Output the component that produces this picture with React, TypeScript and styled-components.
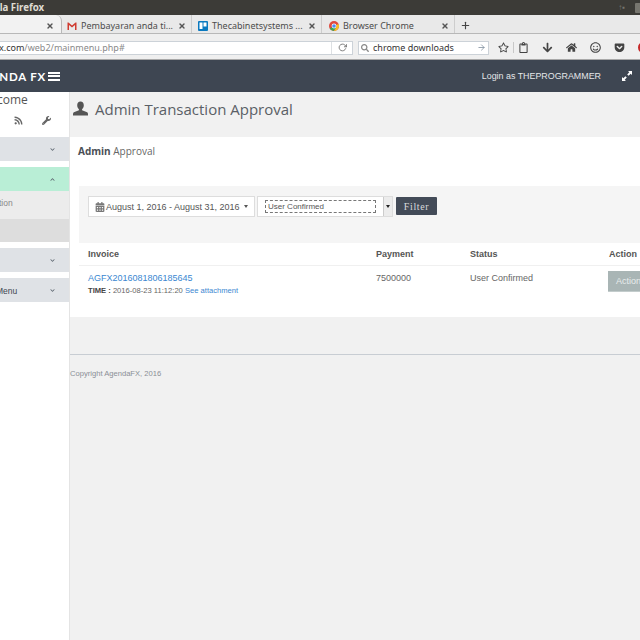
import styled, { createGlobalStyle } from 'styled-components';
import { FaRss, FaWrench, FaCalendarAlt, FaChevronDown, FaChevronUp, FaHome, FaArrowDown, FaRegStar, FaRegClipboard, FaRegSmile, FaGetPocket, FaSearch } from 'react-icons/fa';
import { FiRotateCw, FiArrowRight, FiPlus, FiX } from 'react-icons/fi';

const GlobalStyle = createGlobalStyle`
  html, body { margin: 0; padding: 0; width: 640px; height: 640px; overflow: hidden; background: #f1f1f1; }
  * { box-sizing: border-box; }
`;

const Screen = styled.div`
  width: 640px;
  height: 640px;
  overflow: hidden;
  display: flex;
  flex-direction: column;
  font-family: 'Liberation Sans', Arial, sans-serif;
`;

const TitleBar = styled.div`
  height: 15px;
  flex: none;
  background: #3c3b37;
  display: flex;
  align-items: center;
  justify-content: space-between;
  overflow: hidden;
`;

const TitleText = styled.span`
  margin-left: -26px;
  font: bold 9.7px 'Noto Sans', sans-serif;
  color: #dfdbd2;
  white-space: nowrap;
`;

const TrayIcons = styled.div`
  display: flex;
  align-items: center;
  gap: 10px;
  margin-right: -1px;
  color: #77766f;
  font-size: 8px;
`;

const TrayBox = styled.span`
  width: 6px;
  height: 10px;
  background: #77766f;
  border-radius: 1px;
`;

const TabStrip = styled.div`
  height: 19px;
  flex: none;
  background: #e9e9e9;
  border-bottom: 1px solid #b8b8b8;
  display: flex;
  align-items: center;
`;

const Tab = styled.div<{ $w: number; $pad: number; $active?: boolean }>`
  width: ${(p) => p.$w}px;
  height: 18px;
  flex: none;
  display: flex;
  align-items: center;
  gap: 4px;
  padding: 3px ${(p) => (p.$active ? 7 : 5)}px 0 ${(p) => p.$pad}px;
  font: 9px 'Noto Sans', sans-serif;
  color: #4c4c4c;
  white-space: nowrap;
  background: ${(p) => (p.$active ? '#f2f2f2' : 'transparent')};
  border-right: 1px solid ${(p) => (p.$active ? '#b8b8b8' : '#cdcdcd')};
  border-top-right-radius: ${(p) => (p.$active ? '6px' : '0')};
`;

const TabLabel = styled.span`
  flex: 1;
`;

const TabClose = styled(FiX)`
  width: 8px;
  height: 8px;
  stroke-width: 4;
  color: #555;
  flex: none;
  margin-left: auto;
`;

const NewTab = styled(FiPlus)`
  width: 11px;
  height: 11px;
  stroke-width: 2.5;
  color: #444;
  margin: 3px 0 0 5px;
`;

const NavBar = styled.div`
  height: 26px;
  flex: none;
  background: #efefef;
  border-bottom: 1px solid #a8a8a8;
  display: flex;
  align-items: center;
  padding-top: 2px;
  overflow: hidden;
`;

const UrlBox = styled.div`
  width: 353px;
  height: 14px;
  flex: none;
  background: #fff;
  border: 1px solid #ccd2d8;
  border-left: 0;
  display: flex;
  align-items: center;
  justify-content: space-between;
  padding-right: 5px;
  font: 9px 'Noto Sans', sans-serif;
  color: #8a8a8a;
  white-space: nowrap;
  overflow: hidden;
`;

const UrlText = styled.span`
  margin-left: -1px;
  b { font-weight: 400; color: #333; }
`;

const Reload = styled(FiRotateCw)`
  width: 9px;
  height: 9px;
  color: #777;
  stroke-width: 2.5;
`;

const UrlTools = styled.div`
  height: 100%;
  display: flex;
  align-items: center;
  gap: 6px;
  &::before {
    content: '';
    width: 1px;
    height: 100%;
    background: #dde0e3;
  }
`;

const SearchBox = styled.div`
  width: 131px;
  height: 14px;
  flex: none;
  margin-left: 5px;
  background: #fff;
  border: 1px solid #ccd2d8;
  display: flex;
  align-items: center;
  gap: 4px;
  padding: 0 2px 0 2px;
  font: 9px 'Noto Sans', sans-serif;
  color: #333;
`;

const SearchLabel = styled.span`
  flex: 1;
  white-space: nowrap;
`;

const NavIcons = styled.div`
  display: flex;
  align-items: center;
  gap: 13px;
  margin-left: 9px;
  color: #444;
  font-size: 11px;
  flex: none;
`;

const StarSlot = styled.span`
  display: flex;
  flex: none;
  padding-right: 4px;
  margin-right: -9px;
  border-right: 1px solid #c8c8c8;
`;

const BlockIcon = styled.span`
  width: 11px;
  height: 11px;
  flex: none;
  border: 3px solid #c62828;
  border-radius: 50%;
`;

const Header = styled.div`
  height: 32px;
  flex: none;
  background: #3e4652;
  display: flex;
  align-items: center;
  color: #fff;
`;

const Brand = styled.div`
  width: 138px;
  display: flex;
  align-items: center;
  justify-content: flex-end;
  gap: 2px;
  margin-left: -78px;
  flex: none;
  font: bold 11.5px Lato, sans-serif;
  letter-spacing: 0.8px;
  white-space: nowrap;
`;

const Burger = styled.span`
  width: 12px;
  height: 9px;
  flex: none;
  border-top: 2px solid #fff;
  border-bottom: 2px solid #fff;
  position: relative;
  &::after {
    content: '';
    position: absolute;
    left: 0;
    right: 0;
    top: 1.5px;
    height: 2px;
    background: #fff;
  }
`;

const LoginLabel = styled.span`
  margin-left: auto;
  font-size: 8.9px;
  color: #e4e6e9;
  white-space: nowrap;
`;

const ExpandIcon = styled.svg`
  width: 10px;
  height: 10px;
  flex: none;
  margin: 0 8px 0 21px;
`;

const Body = styled.div`
  flex: 1;
  display: flex;
  min-height: 0;
`;

const Sidebar = styled.aside`
  width: 70px;
  flex: none;
  background: #fff;
  border-right: 1px solid #e4e4e4;
  display: flex;
  flex-direction: column;
`;

const Welcome = styled.div`
  height: 45px;
  flex: none;
  padding-top: 1px;
  overflow: hidden;
`;

const WelcomeText = styled.div`
  font: 12px 'Open Sans', sans-serif;
  line-height: 14px;
  color: #555;
  white-space: nowrap;
  margin-left: -3px;
`;

const WelcomeIcons = styled.div`
  display: flex;
  justify-content: flex-end;
  gap: 19px;
  padding: 9px 18px 0 0;
  color: #666;
  font-size: 9px;
`;

const MenuItem = styled.div<{ $bg: string; $h: number; $gap?: number }>`
  height: ${(p) => p.$h}px;
  flex: none;
  margin-top: ${(p) => p.$gap ?? 0}px;
  background: ${(p) => p.$bg};
  display: flex;
  align-items: center;
  justify-content: space-between;
  padding-right: 13px;
  font-size: 8.5px;
  color: #555;
  white-space: nowrap;
  overflow: hidden;
  svg { width: 7px; height: 5px; color: #5d6670; flex: none; }
`;

const MenuLabel = styled.span<{ $dark?: boolean }>`
  color: ${(p) => (p.$dark ? '#3e4652' : '#888')};
  margin: ${(p) => (p.$dark ? '1px 0 0 -4px' : '0 0 4px -1px')};
`;

const Main = styled.main`
  flex: 1;
  min-width: 0;
  background: #f1f1f1;
  display: flex;
  flex-direction: column;
`;

const PageTitle = styled.div`
  height: 45px;
  flex: none;
  display: flex;
  align-items: center;
  gap: 7px;
  padding: 0 0 12px 3px;
  font: 15px 'Open Sans', sans-serif;
  color: #5a5f66;
  white-space: nowrap;
`;

const UserGlyph = styled.svg`
  width: 15px;
  height: 15px;
  flex: none;
`;

const Card = styled.section`
  height: 180px;
  flex: none;
  background: #fff;
  padding: 0 0 0 9px;
  overflow: hidden;
`;

const CardTitle = styled.div`
  height: 49px;
  flex: none;
  padding-top: 7px;
  margin-left: -1px;
  font: 10px 'Open Sans', sans-serif;
  line-height: 14px;
  color: #666;
  b { color: #4a4f55; }
`;

const FilterPanel = styled.div`
  height: 57px;
  background: #f5f5f5;
  display: flex;
  align-items: flex-start;
  padding: 10px 0 0 9px;
`;

const DateButton = styled.div`
  width: 167px;
  height: 21px;
  flex: none;
  background: #fff;
  border: 1px solid #ddd;
  display: flex;
  align-items: center;
  gap: 1px;
  padding-left: 6px;
  font-size: 9px;
  color: #555;
  white-space: nowrap;
  svg { width: 10px; height: 10px; color: #777; }
`;

const Caret = styled.span`
  width: 0;
  height: 0;
  flex: none;
  margin-left: 3px;
  border-left: 2.5px solid transparent;
  border-right: 2.5px solid transparent;
  border-top: 3px solid #555;
`;

const StatusSelect = styled.div`
  width: 136px;
  height: 21px;
  flex: none;
  margin-left: 2px;
  background: #fff;
  border: 1px solid #ddd;
  display: flex;
  align-items: center;
  padding-left: 7px;
`;

const SelectValue = styled.span`
  width: 111px;
  height: 13px;
  flex: none;
  border: 1px dashed #777;
  padding-left: 2px;
  font-size: 8px;
  line-height: 11px;
  color: #555;
`;

const SelectArrow = styled.span`
  margin-left: auto;
  width: 9px;
  height: 19px;
  flex: none;
  background: #ececec;
  border-left: 1px solid #ccc;
  display: flex;
  align-items: center;
  justify-content: center;
  &::after {
    content: '';
    border-left: 2px solid transparent;
    border-right: 2px solid transparent;
    border-top: 3px solid #222;
  }
`;

const FilterButton = styled.div`
  width: 41px;
  height: 18px;
  flex: none;
  margin: 1px 0 0 3px;
  background: #434b58;
  border-radius: 1px;
  color: #d8dadd;
  font: 10px 'Liberation Serif', serif;
  letter-spacing: 0.6px;
  display: flex;
  align-items: center;
  justify-content: center;
`;

const TableHead = styled.div`
  height: 23px;
  border-bottom: 1px solid #f0f0f0;
  display: grid;
  grid-template-columns: 288px 94px 139px 1fr;
  align-items: center;
  padding-left: 9px;
  font-size: 9px;
  font-weight: 700;
  color: #555;
  white-space: nowrap;
`;

const TableRow = styled.div`
  display: grid;
  grid-template-columns: 288px 94px 138px 1fr;
  padding: 6px 0 0 9px;
  font-size: 9px;
  line-height: 12px;
  color: #666;
  white-space: nowrap;
`;

const InvoiceLink = styled.div`
  color: #3a87d1;
  font-size: 9px;
`;

const InvoiceMeta = styled.div`
  font-size: 7.6px;
  line-height: 13px;
  color: #666;
  b { color: #444; }
  a { color: #3a87d1; }
`;

const ActionButton = styled.div`
  width: 40px;
  height: 21px;
  margin-top: -1px;
  background: #a9b5b5;
  border-bottom: 1px solid #c3cccc;
  color: #e8ecec;
  font-size: 9px;
  line-height: 20px;
  padding-left: 8px;
  overflow: hidden;
`;

const Footer = styled.footer`
  margin-top: 37px;
  border-top: 1px solid #c8cdd3;
  padding-top: 14px;
  font-size: 7.6px;
  line-height: 9px;
  color: #8a8f96;
`;

const GmailIcon = () => (
  <svg width="10" height="8" viewBox="0 0 10 8" style={{ flex: 'none' }}>
    <path d="M0.5 8V0.5H1.5L5 3.5L8.5 0.5H9.5V8H8V3L5 5.5L2 3V8Z" fill="#d03b30" />
  </svg>
);

const TrelloIcon = () => (
  <svg width="10" height="10" viewBox="0 0 10 10" style={{ flex: 'none' }}>
    <rect width="10" height="10" rx="1" fill="#0a79bf" />
    <rect x="1.5" y="1.5" width="3" height="6.5" fill="#fff" />
    <rect x="5.5" y="1.5" width="3" height="4" fill="#fff" />
  </svg>
);

const ChromeIcon = () => (
  <svg width="10" height="10" viewBox="0 0 10 10" style={{ flex: 'none' }}>
    <circle cx="5" cy="5" r="5" fill="#e04a3f" />
    <path d="M5 5L0.7 7.5A5 5 0 0 0 5 10L7.5 5.5Z" fill="#3aa757" />
    <path d="M5 5L7.5 5.5L5 10A5 5 0 0 0 9.6 3Z" fill="#f6c026" />
    <circle cx="5" cy="5" r="2.4" fill="#fff" />
    <circle cx="5" cy="5" r="1.8" fill="#4a8af4" />
  </svg>
);

export default function App() {
  return (
    <Screen>
      <GlobalStyle />
      <TitleBar>
        <TitleText>Mozilla Firefox</TitleText>
        <TrayIcons>
          <span>↑▪</span>
          <TrayBox />
        </TrayIcons>
      </TitleBar>
      <TabStrip>
        <Tab $w={62} $pad={5} $active>
          <TabClose />
        </Tab>
        <Tab $w={130} $pad={5}>
          <GmailIcon />
          <TabLabel>Pembayaran anda ti...</TabLabel>
          <TabClose />
        </Tab>
        <Tab $w={130} $pad={6}>
          <TrelloIcon />
          <TabLabel>Thecabinetsystems ...</TabLabel>
          <TabClose />
        </Tab>
        <Tab $w={133} $pad={7}>
          <ChromeIcon />
          <TabLabel>Browser Chrome</TabLabel>
          <TabClose />
        </Tab>
        <NewTab />
      </TabStrip>
      <NavBar>
        <UrlBox>
          <UrlText>
            <b>x.com</b>/web2/mainmenu.php#
          </UrlText>
          <UrlTools>
            <Reload />
          </UrlTools>
        </UrlBox>
        <SearchBox>
          <FaSearch size={8} color="#888" />
          <SearchLabel>chrome downloads</SearchLabel>
          <FiArrowRight size={9} color="#7a8a9a" />
        </SearchBox>
        <NavIcons>
          <StarSlot>
            <FaRegStar />
          </StarSlot>
          <FaRegClipboard />
          <FaArrowDown />
          <FaHome />
          <FaRegSmile />
          <FaGetPocket />
          <BlockIcon />
        </NavIcons>
      </NavBar>
      <Header>
        <Brand>
          AGENDA FX
          <Burger />
        </Brand>
        <LoginLabel>Login as THEPROGRAMMER</LoginLabel>
        <ExpandIcon viewBox="0 0 10 10">
          <path d="M6 0H10V4L8.7 2.7L6.6 4.8L5.2 3.4L7.3 1.3Z" fill="#fff" />
          <path d="M0 10V6L1.3 7.3L3.4 5.2L4.8 6.6L2.7 8.7L4 10Z" fill="#fff" />
        </ExpandIcon>
      </Header>
      <Body>
        <Sidebar>
          <Welcome>
            <WelcomeText>come</WelcomeText>
            <WelcomeIcons>
              <FaRss />
              <FaWrench />
            </WelcomeIcons>
          </Welcome>
          <MenuItem $bg="#dfe2e6" $h={24}>
            <span />
            <FaChevronDown />
          </MenuItem>
          <MenuItem $bg="#b9eed6" $h={24} $gap={6}>
            <span />
            <FaChevronUp />
          </MenuItem>
          <MenuItem $bg="#ececec" $h={28}>
            <MenuLabel>tion</MenuLabel>
          </MenuItem>
          <MenuItem $bg="#dddddd" $h={23} />
          <MenuItem $bg="#dfe2e6" $h={24} $gap={6}>
            <span />
            <FaChevronDown />
          </MenuItem>
          <MenuItem $bg="#dfe2e6" $h={24} $gap={6}>
            <MenuLabel $dark>Menu</MenuLabel>
            <FaChevronDown />
          </MenuItem>
        </Sidebar>
        <Main>
          <PageTitle>
            <UserGlyph viewBox="0 0 15 15">
              <path d="M7.5 0.5C5.4 0.5 4.2 2 4.2 4.2C4.2 5.8 4.9 7.3 5.9 8V9.3L1.5 11C0.5 11.4 0 12.2 0 13V14.5H15V13C15 12.2 14.5 11.4 13.5 11L9.1 9.3V8C10.1 7.3 10.8 5.8 10.8 4.2C10.8 2 9.6 0.5 7.5 0.5Z" fill="#555" />
            </UserGlyph>
            Admin Transaction Approval
          </PageTitle>
          <Card>
            <CardTitle>
              <b>Admin</b> Approval
            </CardTitle>
            <FilterPanel>
              <DateButton>
                <FaCalendarAlt />
                August 1, 2016 - August 31, 2016
                <Caret />
              </DateButton>
              <StatusSelect>
                <SelectValue>User Confirmed</SelectValue>
                <SelectArrow />
              </StatusSelect>
              <FilterButton>Filter</FilterButton>
            </FilterPanel>
            <TableHead>
              <span>Invoice</span>
              <span>Payment</span>
              <span>Status</span>
              <span>Action</span>
            </TableHead>
            <TableRow>
              <div>
                <InvoiceLink>AGFX2016081806185645</InvoiceLink>
                <InvoiceMeta>
                  <b>TIME :</b> 2016-08-23 11:12:20 <a>See attachment</a>
                </InvoiceMeta>
              </div>
              <span>7500000</span>
              <span>User Confirmed</span>
              <ActionButton>Action</ActionButton>
            </TableRow>
          </Card>
          <Footer>Copyright AgendaFX, 2016</Footer>
        </Main>
      </Body>
    </Screen>
  );
}
